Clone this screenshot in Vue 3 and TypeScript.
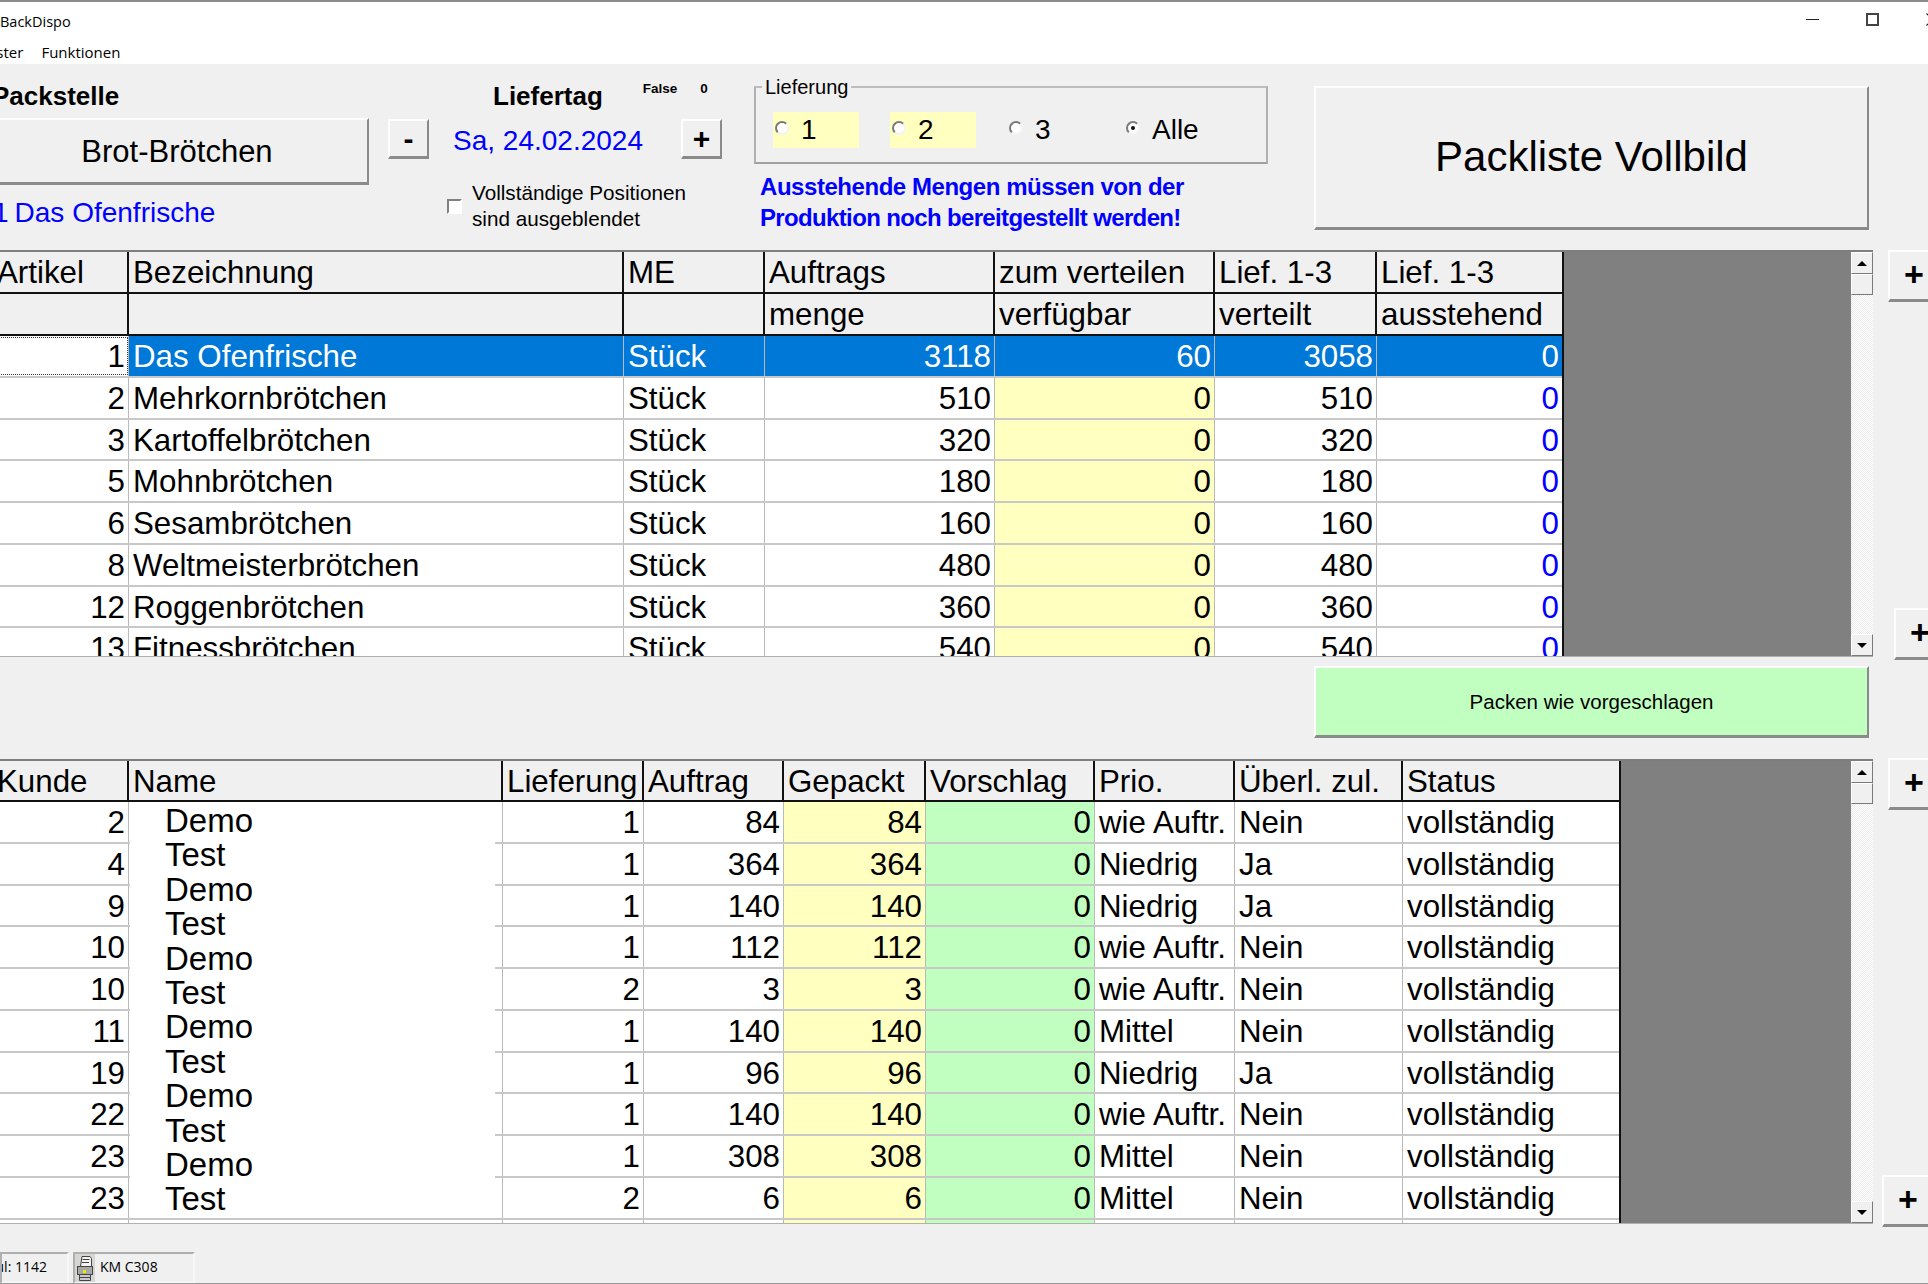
<template>
  <div class="window">
    <header class="titlebar">
      <div class="caption">
        <span class="app-name">BackDispo</span>
        <div class="win-controls">
          <span class="win-min"></span>
          <span class="win-max"></span>
          <svg class="win-close" width="13" height="13" viewBox="0 0 13 13">
            <path d="M0.5 0.5l12 12M12.5 0.5l-12 12" stroke="#222" stroke-width="1.2" fill="none" />
          </svg>
        </div>
      </div>
      <nav class="menu">
        <span>Fenster</span>
        <span>Funktionen</span>
      </nav>
    </header>

    <section class="toolbar">
      <div class="pack-col">
        <div class="bold-label pack-label">Packstelle</div>
        <button class="btn pack-btn">Brot-Brötchen</button>
        <div class="pack-name"><span class="pack-nr">1</span>Das Ofenfrische</div>
      </div>

      <div class="day-col">
        <div class="day-head">
          <div class="bold-label">Liefertag</div>
          <div class="debug"><span>False</span><span>0</span></div>
        </div>
        <div class="day-row">
          <button class="btn step-btn">-</button>
          <span class="day-value">Sa, 24.02.2024</span>
          <button class="btn step-btn">+</button>
        </div>
        <label class="hide-check">
          <span class="checkbox"></span>
          <span>Vollständige Positionen<br />sind ausgeblendet</span>
        </label>
      </div>

      <div class="delivery-col">
        <fieldset class="delivery">
          <legend>Lieferung</legend>
          <div
            v-for="opt in deliveries"
            :key="opt.label"
            class="radio-item"
            :class="{ marked: opt.marked }"
          >
            <span class="radio" :class="{ on: opt.on }"></span>
            <span>{{ opt.label }}</span>
          </div>
        </fieldset>
        <p class="notice">Ausstehende Mengen müssen von der<br /><span class="notice-2">Produktion noch bereitgestellt werden!</span></p>
      </div>

      <button class="btn full-btn">Packliste Vollbild</button>
    </section>

    <section class="grid-row top-grid">
      <div class="grid-frame">
        <div class="grid-body">
          <div class="table top-table">
            <div class="row head">
              <div v-for="h in topHead1" :key="h" class="cell">{{ h }}</div>
            </div>
            <div class="row head">
              <div v-for="(h, i) in topHead2" :key="i" class="cell">{{ h }}</div>
            </div>
            <div
              v-for="(r, i) in articles"
              :key="r.nr"
              class="row"
              :class="{ selected: i === 0 }"
            >
              <div class="cell num nr" :class="{ focus: i === 0 }">{{ r.nr }}</div>
              <div class="cell">{{ r.name }}</div>
              <div class="cell">Stück</div>
              <div class="cell num">{{ r.menge }}</div>
              <div class="cell num yellow">{{ r.avail }}</div>
              <div class="cell num">{{ r.dist }}</div>
              <div class="cell num blue">0</div>
            </div>
          </div>
          <div class="empty"></div>
        </div>
        <div class="scrollbar">
          <span class="sb-btn"><i class="up"></i></span>
          <span class="sb-thumb"></span>
          <span class="sb-track"></span>
          <span class="sb-btn"><i class="down"></i></span>
        </div>
      </div>
      <div class="side-btns">
        <button class="btn side-btn">+</button>
        <button class="btn side-btn inner">+</button>
      </div>
    </section>

    <section class="actions">
      <button class="btn go-btn">Packen wie vorgeschlagen</button>
    </section>

    <section class="grid-row bottom-grid">
      <div class="grid-frame">
        <div class="grid-body">
          <div class="table low-table">
            <div class="row head">
              <div v-for="h in lowHead" :key="h" class="cell">{{ h }}</div>
            </div>
            <div v-for="(r, i) in orders" :key="i" class="row">
              <div class="cell num nr">{{ r.kunde }}</div>
              <div class="cell"></div>
              <div class="cell num">{{ r.lief }}</div>
              <div class="cell num">{{ r.auftrag }}</div>
              <div class="cell num yellow">{{ r.auftrag }}</div>
              <div class="cell num green">0</div>
              <div class="cell">{{ r.prio }}</div>
              <div class="cell">{{ r.ueberl }}</div>
              <div class="cell">vollständig</div>
            </div>
            <div class="row stub">
              <div v-for="n in 9" :key="n" class="cell" :class="{ yellow: n === 5, green: n === 6 }"></div>
            </div>
            <div class="name-overlay">
              <div v-for="n in 12" :key="n">{{ n % 2 === 1 ? 'Demo' : 'Test' }}</div>
            </div>
          </div>
          <div class="empty"></div>
        </div>
        <div class="scrollbar">
          <span class="sb-btn"><i class="up"></i></span>
          <span class="sb-thumb"></span>
          <span class="sb-track"></span>
          <span class="sb-btn"><i class="down"></i></span>
        </div>
      </div>
      <div class="side-btns">
        <button class="btn side-btn low-first">+</button>
        <button class="btn side-btn outer">+</button>
      </div>
    </section>

    <footer class="statusbar">
      <div class="panel first"><span>Modul: 1142</span></div>
      <div class="panel printer">
        <svg class="printer-icon" width="20" height="28" viewBox="0 0 20 28">
          <rect x="0" y="0" width="20" height="28" fill="#d6d6d2" />
          <path d="M7 2.5h8l1.5 2v8h-11z" fill="#f4f4f4" stroke="#444" />
          <path d="M7.5 5.5h7M7 8.5h7" stroke="#444" />
          <rect x="2.5" y="12.5" width="15" height="8" fill="#a8a8a8" stroke="#444" />
          <rect x="8" y="16" width="3" height="3" fill="#f2e600" />
          <path d="M4.5 20.5h11v6h-11z" fill="#c8c8c8" stroke="#444" />
          <path d="M5 23.5h10" stroke="#444" />
        </svg>
        <span>KM C308</span>
      </div>
    </footer>
  </div>
</template>

<script setup lang="ts">
const deliveries = [
  { label: "1", marked: true, on: false },
  { label: "2", marked: true, on: false },
  { label: "3", marked: false, on: false },
  { label: "Alle", marked: false, on: true },
];

const topHead1 = ["Artikel", "Bezeichnung", "ME", "Auftrags", "zum verteilen", "Lief. 1-3", "Lief. 1-3"];
const topHead2 = ["", "", "", "menge", "verfügbar", "verteilt", "ausstehend"];

const articles = [
  { nr: 1, name: "Das Ofenfrische", menge: 3118, avail: 60, dist: 3058 },
  { nr: 2, name: "Mehrkornbrötchen", menge: 510, avail: 0, dist: 510 },
  { nr: 3, name: "Kartoffelbrötchen", menge: 320, avail: 0, dist: 320 },
  { nr: 5, name: "Mohnbrötchen", menge: 180, avail: 0, dist: 180 },
  { nr: 6, name: "Sesambrötchen", menge: 160, avail: 0, dist: 160 },
  { nr: 8, name: "Weltmeisterbrötchen", menge: 480, avail: 0, dist: 480 },
  { nr: 12, name: "Roggenbrötchen", menge: 360, avail: 0, dist: 360 },
  { nr: 13, name: "Fitnessbrötchen", menge: 540, avail: 0, dist: 540 },
];

const lowHead = ["Kunde", "Name", "Lieferung", "Auftrag", "Gepackt", "Vorschlag", "Prio.", "Überl. zul.", "Status"];

const orders = [
  { kunde: 2, lief: 1, auftrag: 84, prio: "wie Auftr.", ueberl: "Nein" },
  { kunde: 4, lief: 1, auftrag: 364, prio: "Niedrig", ueberl: "Ja" },
  { kunde: 9, lief: 1, auftrag: 140, prio: "Niedrig", ueberl: "Ja" },
  { kunde: 10, lief: 1, auftrag: 112, prio: "wie Auftr.", ueberl: "Nein" },
  { kunde: 10, lief: 2, auftrag: 3, prio: "wie Auftr.", ueberl: "Nein" },
  { kunde: 11, lief: 1, auftrag: 140, prio: "Mittel", ueberl: "Nein" },
  { kunde: 19, lief: 1, auftrag: 96, prio: "Niedrig", ueberl: "Ja" },
  { kunde: 22, lief: 1, auftrag: 140, prio: "wie Auftr.", ueberl: "Nein" },
  { kunde: 23, lief: 1, auftrag: 308, prio: "Mittel", ueberl: "Nein" },
  { kunde: 23, lief: 2, auftrag: 6, prio: "Mittel", ueberl: "Nein" },
];
</script>

<style>
html,
body {
  margin: 0;
  background: #f0f0f0;
}
</style>

<style scoped>
.window {
  width: 1928px;
  height: 1284px;
  overflow: hidden;
  display: flex;
  flex-direction: column;
  background: #f0f0f0;
  color: #000;
  font-family: "Liberation Sans", Arial, sans-serif;
  border-bottom: 1px solid #9a9a9a;
  box-sizing: border-box;
}

/* title + menu */
.titlebar {
  height: 64px;
  flex: none;
  background: #fff;
  border-top: 2px solid #8c8c8c;
  box-sizing: border-box;
  font-family: "Open Sans", "Noto Sans", sans-serif;
  font-size: 14.5px;
}
.caption {
  height: 38px;
  display: flex;
  justify-content: space-between;
  align-items: center;
}
.win-controls {
  display: flex;
  align-items: center;
  margin-right: -11px;
  height: 100%;
  padding-bottom: 4px;
  box-sizing: border-box;
}
.win-min {
  width: 13px;
  height: 1px;
  background: #222;
}
.win-max {
  width: 13px;
  height: 13px;
  box-sizing: border-box;
  border: 2px solid #444;
  margin-left: 47px;
}
.win-close {
  margin-left: 47px;
  flex: none;
}
.menu {
  display: flex;
  gap: 18px;
  margin-left: -29px;
  line-height: 24px;
  font-size: 15px;
}

/* top controls */
.toolbar {
  height: 186px;
  flex: none;
  display: flex;
}
.bold-label {
  font-size: 26px;
  font-weight: 700;
  line-height: 30px;
}
.btn {
  font-family: inherit;
  background: #f0f0f0;
  color: #000;
  padding: 0;
  box-sizing: border-box;
  border: 2px solid;
  border-color: #fdfdfd #8a8a8a #8a8a8a #fdfdfd;
  border-bottom-width: 3px;
}
.pack-col {
  width: 369px;
  margin-left: -3px;
  padding-top: 17px;
  flex: none;
}
.pack-label {
  margin-left: -5px;
}
.pack-btn {
  display: block;
  width: 372px;
  height: 67px;
  margin-top: 7px;
  padding: 2px 12px 0 0;
  font-size: 31px;
}
.pack-name {
  font-size: 28px;
  line-height: 32px;
  color: #00f;
  margin-top: 12px;
  margin-left: -4px;
  white-space: nowrap;
}
.pack-nr {
  margin-right: 6px;
}
.day-col {
  width: 334px;
  margin-left: 22px;
  flex: none;
}
.day-head {
  display: flex;
  padding-top: 17px;
  padding-left: 105px;
  height: 38px;
  box-sizing: content-box;
}
.debug {
  display: flex;
  gap: 23px;
  font-size: 13.5px;
  font-weight: 700;
  line-height: 16px;
  margin-left: 40px;
}
.day-row {
  display: flex;
  align-items: center;
  justify-content: space-between;
  height: 40px;
}
.step-btn {
  width: 41px;
  height: 40px;
  font-size: 30px;
  font-weight: 700;
  line-height: 32px;
}
.day-value {
  font-size: 28px;
  color: #00f;
  padding-top: 4px;
  margin-right: 14px;
}
.hide-check {
  display: flex;
  align-items: center;
  gap: 10px;
  margin-top: 21px;
  margin-left: 59px;
  font-size: 20.7px;
  line-height: 26px;
}
.checkbox {
  width: 15px;
  height: 15px;
  box-sizing: border-box;
  flex: none;
  background: #fff;
  border: 2px solid;
  border-color: #808080 #fff #fff #808080;
}
.delivery-col {
  margin-left: 32px;
  width: 514px;
  flex: none;
  padding-top: 22px;
}
.delivery {
  position: relative;
  margin: 0;
  padding: 10px 0 0 17px;
  height: 78px;
  box-sizing: border-box;
  width: 514px;
  border: 2px solid;
  border-color: #bdbdbd #b0b0b0 #a0a0a0 #b0b0b0;
  display: flex;
  align-items: center;
  font-size: 28px;
}
.delivery legend {
  position: absolute;
  top: -13px;
  left: 6px;
  padding: 0 3px;
  background: #f0f0f0;
  font-size: 20px;
  line-height: 24px;
}
.radio-item {
  width: 86px;
  height: 36px;
  margin-right: 31px;
  flex: none;
  display: flex;
  align-items: center;
  gap: 12px;
  padding-left: 2px;
  box-sizing: border-box;
}
.radio-item.marked {
  background: #ffffc0;
}
.radio {
  position: relative;
  top: -2px;
  width: 14px;
  height: 14px;
  box-sizing: border-box;
  border-radius: 50%;
  background: #fff;
  border: 2px solid;
  border-color: #7a7a7a #f4f4f4 #f4f4f4 #7a7a7a;
  flex: none;
}
.radio.on::after {
  content: "";
  position: absolute;
  left: 3px;
  top: 3px;
  width: 4px;
  height: 4px;
  border-radius: 50%;
  background: #111;
}
.notice {
  margin: 7px 0 0 6px;
  font-size: 24px;
  font-weight: 700;
  line-height: 31px;
  color: #00f;
  letter-spacing: -0.45px;
  white-space: nowrap;
}
.notice-2 {
  letter-spacing: -0.65px;
}
.full-btn {
  width: 555px;
  height: 144px;
  margin-top: 22px;
  margin-left: 46px;
  padding-bottom: 1px;
  font-size: 42px;
}

/* grids */
.grid-row {
  display: flex;
  flex: none;
}
.top-grid {
  height: 407px;
}
.grid-frame {
  width: 1873px;
  flex: none;
  display: flex;
  box-sizing: border-box;
  border-top: 2px solid #7e7e7e;
  border-bottom: 1px solid #b0b0b0;
  background: #fff;
}
.grid-body {
  flex: 1;
  min-width: 0;
  display: flex;
  overflow: hidden;
  background: #808080;
}
.table {
  position: relative;
  flex: none;
  margin-left: -7px;
  background: #fff;
  overflow: hidden;
  font-size: 31.3px;
}
.top-table {
  --cols: 136px 495px 141px 230px 220px 162px 185px;
}
.low-table {
  --cols: 136px 374px 141px 140px 142px 169px 140px 168px 216px;
}
.row {
  display: grid;
  grid-template-columns: var(--cols);
  height: 41.75px;
  box-sizing: border-box;
  border-bottom: 2px solid #c8c8c8;
  line-height: 42px;
}
.cell {
  box-sizing: border-box;
  padding: 0 3px 0 4px;
  border-right: 1px solid #b9b9b9;
  white-space: nowrap;
  overflow: hidden;
  height: 100%;
}
.cell:last-child {
  border-right: none;
}
.num {
  text-align: right;
}
.yellow {
  background: #ffffc0;
}
.green {
  background: #c0ffc0;
}
.blue {
  color: #00f;
}
.row.head {
  background: #f0f0f0;
  border-bottom: 2px solid #111;
  height: 42px;
}
.low-table .row.head {
  height: 41px;
}
.row.head .cell {
  border-right: 2px solid #111;
}
.row.head .cell:last-child {
  border-right: none;
}
.row.selected {
  background: #0078d7;
  color: #fff;
}
.row.selected .yellow {
  background: #0078d7;
}
.row.selected .blue {
  color: #fff;
}
.row.selected .nr {
  background: #fff;
  color: #000;
}
.nr.focus {
  outline: 1px dotted #333;
  outline-offset: -2px;
}
.row.stub {
  height: 8px;
  border-bottom: none;
}
.name-overlay {
  position: absolute;
  left: 137px;
  top: 41px;
  width: 365px;
  bottom: 8px;
  overflow: hidden;
  background: #fff;
  padding-left: 35px;
  box-sizing: border-box;
  font-size: 33px;
  line-height: 34.4px;
}
.name-overlay div:first-child {
  margin-top: 2px;
}
.empty {
  flex: 1;
}
.low-table + .empty,
.top-table + .empty {
  border-left: 2px solid #111;
}

/* scrollbar */
.scrollbar {
  width: 22px;
  flex: none;
  display: flex;
  flex-direction: column;
  background: #f0f0f0;
}
.sb-btn,
.sb-thumb {
  flex: none;
  box-sizing: border-box;
  background: #f0f0f0;
  border: 1px solid;
  border-color: #fff #7a7a7a #7a7a7a #fff;
  display: flex;
  align-items: center;
  justify-content: center;
}
.sb-btn {
  height: 22px;
}
.sb-thumb {
  height: 21px;
}
.sb-track {
  flex: 1;
  background: repeating-conic-gradient(#fff 0 25%, #ececec 0 50%) 0 0 / 2px 2px;
}
.sb-btn i {
  width: 0;
  height: 0;
  border-left: 5px solid transparent;
  border-right: 5px solid transparent;
}
.sb-btn i.up {
  border-bottom: 5px solid #000;
}
.sb-btn i.down {
  border-top: 5px solid #000;
}
.side-btns {
  flex: 1;
  display: flex;
  flex-direction: column;
  justify-content: space-between;
}
.side-btn {
  width: 50px;
  height: 52px;
  margin-left: 15px;
  font-size: 34px;
  font-weight: 700;
  text-align: left;
  padding: 0 0 4px 14px;
  line-height: 40px;
  flex: none;
}
.side-btn.inner {
  margin-left: 21px;
  margin-bottom: -3px;
}
.side-btn.low-first {
  margin-top: -1px;
}
.side-btn.outer {
  margin-left: 9px;
  margin-bottom: -3px;
}

/* green action */
.actions {
  height: 102px;
  flex: none;
  padding-top: 9px;
  box-sizing: border-box;
}
.go-btn {
  display: block;
  width: 555px;
  height: 72px;
  margin-left: 1314px;
  background: #c0ffc0;
  font-size: 20.5px;
}
.bottom-grid {
  height: 465px;
}

/* status */
.statusbar {
  flex: none;
  height: 32px;
  margin-top: 28px;
  display: flex;
  gap: 4px;
  font-size: 14px;
  font-family: "Open Sans", "Noto Sans", sans-serif;
}
.panel {
  box-sizing: border-box;
  border: 2px solid;
  border-color: #b0b0b0 #f8f8f8 #f8f8f8 #b0b0b0;
  height: 32px;
  padding-bottom: 4px;
  display: flex;
  align-items: center;
  white-space: nowrap;
  overflow: hidden;
}
.first {
  width: 69px;
  justify-content: flex-end;
  padding-right: 20px;
}
.printer {
  width: 122px;
  gap: 5px;
  padding-bottom: 0;
  align-items: flex-start;
  line-height: 25px;
}
.printer-icon {
  flex: none;
}
</style>
